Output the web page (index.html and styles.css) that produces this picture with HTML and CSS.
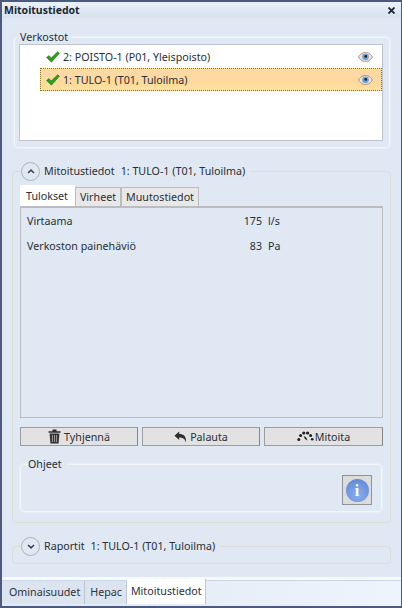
FILE: index.html
```html
<!DOCTYPE html>
<html lang="fi">
<head>
    <meta charset="UTF-8">
    <meta name="viewport" content="width=device-width, initial-scale=1.0">
    <title>Mitoitustiedot</title>
    <link rel="stylesheet" href="styles.css">
</head>
<body>
    <div class="window">
        <div class="titlebar">
            <span class="title">Mitoitustiedot</span>
            <svg class="close" width="7" height="7" viewBox="0 0 7 7"><path d="M0.5 0.5L6.5 6.5M6.5 0.5L0.5 6.5" stroke="#1c2430" stroke-width="1.8"/></svg>
        </div>

        <div class="content">
            <fieldset class="group networks">
                <legend>Verkostot</legend>
                <div class="network-list">
                    <div class="network">
                        <svg class="check" width="14" height="12" viewBox="0 0 14 12"><path d="M0.5 6.5L3 4.6L5.2 7L11.6 0.8L13.5 2.2L5.4 11.2Z" fill="#2f9f1e" stroke="#1c7a12" stroke-width="0.6"/></svg>
                        <span class="network-name">2: POISTO-1 (P01, Yleispoisto)</span>
                        <svg class="eye" width="15" height="10" viewBox="0 0 15 10"><path d="M0.5 5C3 1.2 5.2 0.5 7.5 0.5S12 1.2 14.5 5C12 8.8 9.8 9.5 7.5 9.5S3 8.8 0.5 5Z" fill="#f1e4d8" stroke="#b08d74"/><circle cx="7.5" cy="4.8" r="3.4" fill="#6fa3dc"/><circle cx="7.7" cy="4.4" r="1.3" fill="#10202f"/></svg>
                    </div>
                    <div class="network selected">
                        <svg class="check" width="14" height="12" viewBox="0 0 14 12"><path d="M0.5 6.5L3 4.6L5.2 7L11.6 0.8L13.5 2.2L5.4 11.2Z" fill="#2f9f1e" stroke="#1c7a12" stroke-width="0.6"/></svg>
                        <span class="network-name">1: TULO-1 (T01, Tuloilma)</span>
                        <svg class="eye" width="15" height="10" viewBox="0 0 15 10"><path d="M0.5 5C3 1.2 5.2 0.5 7.5 0.5S12 1.2 14.5 5C12 8.8 9.8 9.5 7.5 9.5S3 8.8 0.5 5Z" fill="#f1e4d8" stroke="#b08d74"/><circle cx="7.5" cy="4.8" r="3.4" fill="#6fa3dc"/><circle cx="7.7" cy="4.4" r="1.3" fill="#10202f"/></svg>
                    </div>
                </div>
            </fieldset>

            <fieldset class="expander details">
                <legend>
                    <span class="toggle"><svg width="8" height="5" viewBox="0 0 8 5"><path d="M1 4L4 1.2L7 4" fill="none" stroke="#3a4350" stroke-width="1.6"/></svg></span>
                    <span>Mitoitustiedot</span><span class="legend-sub">1: TULO-1 (T01, Tuloilma)</span>
                </legend>

                <div class="tabs">
                    <div class="tab active">Tulokset</div>
                    <div class="tab">Virheet</div>
                    <div class="tab">Muutostiedot</div>
                </div>
                <div class="tab-panel">
                    <div class="result-row">
                        <span class="result-label">Virtaama</span>
                        <span class="result-value">175</span>
                        <span class="result-unit">l/s</span>
                    </div>
                    <div class="result-row">
                        <span class="result-label">Verkoston painehäviö</span>
                        <span class="result-value">83</span>
                        <span class="result-unit">Pa</span>
                    </div>
                </div>

                <div class="buttons">
                    <button class="btn">
                        <svg width="13" height="15" viewBox="0 0 13 15"><path d="M0.5 2.2H12.5V3.8H0.5ZM4.5 2.2V0.6H8.5V2.2Z" fill="#2b2b2b"/><path d="M1.6 4.6H11.4L10.6 14.5H2.4Z" fill="#333"/><path d="M4.4 6V13M6.5 6V13M8.6 6V13" stroke="#a8a8a8" stroke-width="0.9"/></svg>
                        Tyhjennä
                    </button>
                    <button class="btn">
                        <svg width="13" height="12" viewBox="0 0 13 12"><path d="M5.2 0.5V3C9.5 3 12.5 5 12 11.5C11 8 9 6.6 5.2 6.6V9L0.5 4.7Z" fill="#2e2e2e"/></svg>
                        Palauta
                    </button>
                    <button class="btn btn-tight">
                        <svg width="17" height="11" viewBox="0 0 17 11"><g fill="#1f1f1f"><circle cx="1.8" cy="8.6" r="1.5"/><circle cx="3.6" cy="4.6" r="1.5"/><circle cx="6.8" cy="2" r="1.6"/><circle cx="10.6" cy="2" r="1.6"/><circle cx="13.6" cy="4.4" r="1.5"/><circle cx="15.2" cy="8.2" r="1.3"/><path d="M6.6 5L9 6.2L10.6 9.6L8 8Z"/></g></svg>
                        Mitoita
                    </button>
                </div>

                <fieldset class="group help">
                    <legend>Ohjeet</legend>
                    <div class="help-body">
                        <button class="info-btn" aria-label="Info">
                            <span class="info-icon">i</span>
                        </button>
                    </div>
                </fieldset>
            </fieldset>

            <fieldset class="expander reports">
                <legend>
                    <span class="toggle"><svg width="8" height="5" viewBox="0 0 8 5"><path d="M1 1L4 3.8L7 1" fill="none" stroke="#3a4350" stroke-width="1.6"/></svg></span>
                    <span>Raportit</span><span class="legend-sub">1: TULO-1 (T01, Tuloilma)</span>
                </legend>
            </fieldset>
        </div>

        <div class="bottom-tabs">
            <div class="bottom-tab">Ominaisuudet</div>
            <div class="bottom-tab">Hepac</div>
            <div class="bottom-tab active">Mitoitustiedot</div>
        </div>
    </div>
</body>
</html>
```

FILE: styles.css
```css
* {
    box-sizing: border-box;
}
body {
    margin: 0;
    background-color: #dfe8f3;
    font-family: "Noto Sans", "Open Sans", sans-serif;
    font-size: 10.7px;
    color: #2a2f35;
    overflow: hidden;
}
.window {
    width: 402px;
    height: 608px;
    display: flex;
    flex-direction: column;
    border: 2px solid #4c5a80;
    border-right-width: 1px;
    background-color: #dfe8f3;
}
.titlebar {
    height: 16px;
    flex: none;
    display: flex;
    align-items: center;
    justify-content: space-between;
    padding: 0 6px 0 2px;
    background: linear-gradient(#eaf1f9, #d6e2f1);
}
.title {
    font-weight: bold;
    font-size: 10.5px;
    color: #1d2733;
}
.content {
    flex: 1;
    padding: 12px 10px 0 10px;
    display: flex;
    flex-direction: column;
}

/* ryhmat */
fieldset {
    margin: 0;
    min-width: 0;
}
.group {
    border: 1px solid #f2f6fb;
    border-radius: 4px;
    box-shadow: 0 0 0 1px #e8eef6;
}
.group legend {
    padding: 0 4px;
    margin-left: 2px;
    line-height: 14px;
}
.networks {
    height: 118px;
    margin: 0 1px 0 2px;
    padding: 0 6px 0 4px;
}
.networks legend {
    margin-left: -3px;
}
.network-list {
    height: 97px;
    background-color: #ffffff;
    border: 1px solid #bcc3cc;
}
.network {
    height: 23px;
    margin-left: 20px;
    display: flex;
    align-items: center;
    padding: 0 8px 0 5px;
    border: 1px solid transparent;
}
.network.selected {
    background: linear-gradient(#fdd9a8, #ffd99c 60%, #fde39e);
    border: 1px dotted #8a7420;
}
.check {
    margin-right: 3px;
}
.network-name {
    flex: 1;
}
.expander {
    border: 1px solid #dcdfd8;
    border-radius: 4px;
    padding: 0 7px;
}
.expander legend {
    display: flex;
    align-items: center;
    margin-left: 1px;
    padding: 0 5px 0 0;
    background-color: #dfe8f3;
    height: 20px;
}
.toggle {
    width: 19px;
    height: 19px;
    border-radius: 50%;
    border: 1.5px solid #aeb4bb;
    display: flex;
    align-items: center;
    justify-content: center;
    margin-right: 4px;
}
.legend-sub {
    margin-left: 6px;
}
.details {
    margin-top: 13px;
    height: 362px;
}

/* valilehdet */
.tabs {
    display: flex;
    height: 22px;
    margin-top: 3px;
    align-items: flex-end;
}
.tab {
    height: 19px;
    padding: 0 4px;
    line-height: 18px;
    background-color: #e8e8e8;
    border: 1px solid #b9bdc2;
    border-bottom: 0;
}
.tab.active {
    height: 21px;
    padding: 0 6px 0 5px;
    line-height: 20px;
    background-color: #ffffff;
    border-color: #ffffff;
}
.tab-panel {
    height: 212px;
    background-color: #dfe8f3;
    border: 1px solid #b9bdc2;
    border-top-width: 2px;
    padding: 5px 6px;
}
.result-row {
    display: flex;
    height: 24.5px;
    line-height: 16px;
}
.result-label {
    width: 207px;
}
.result-value {
    width: 28px;
    text-align: right;
}
.result-unit {
    margin-left: 6px;
}

/* napit */
.buttons {
    display: grid;
    grid-template-columns: 118px 118px 119px;
    gap: 4px;
    margin-top: 9px;
}
.btn {
    height: 19px;
    background-color: #e2e2e2;
    border: 1px solid #9a9ea2;
    border-right-color: #888;
    font: inherit;
    color: inherit;
    padding: 0;
    display: flex;
    align-items: center;
    justify-content: center;
    gap: 3px;
}
.btn-tight {
    gap: 1px;
}
.help {
    margin: 8px 1px 0 0;
    height: 58px;
    padding: 0 9px 0 0;
}
.help legend {
    margin-left: 7px;
}
.help-body {
    display: flex;
    justify-content: flex-end;
    padding-top: 1px;
}
.info-btn {
    width: 30px;
    height: 30px;
    background-color: #dcdcdc;
    border: 1px solid #8f9398;
    padding: 0;
    display: flex;
    align-items: center;
    justify-content: center;
}
.info-icon {
    width: 23px;
    height: 23px;
    border-radius: 50%;
    background: radial-gradient(circle at 50% 70%, #88b0ec, #5b82d2);
    color: #ffffff;
    font: bold 16px/23px "Liberation Serif", serif;
    text-align: center;
}
.reports {
    margin-top: 13px;
    height: 28px;
}

/* alavalilehdet */
.bottom-tabs {
    flex: none;
    height: 29px;
    display: flex;
    align-items: flex-end;
    border-top: 3px solid #f6f9fd;
    box-shadow: inset 0 1px 0 #c8d6e8;
    padding-bottom: 2px;
    background: linear-gradient(to right, #dfe8f4, #eef4fc);
}
.bottom-tab {
    height: 23px;
    line-height: 22px;
    padding: 0 4px 0 7px;
    background-color: #dbe4ef;
    border-right: 1px solid #bcc6d2;
    color: #2b323a;
}
.bottom-tab:nth-child(2) {
    padding: 0 4px 0 5px;
}
.bottom-tab.active {
    height: 25px;
    line-height: 24px;
    padding: 0 3px 0 4px;
    background-color: #ffffff;
}
```
